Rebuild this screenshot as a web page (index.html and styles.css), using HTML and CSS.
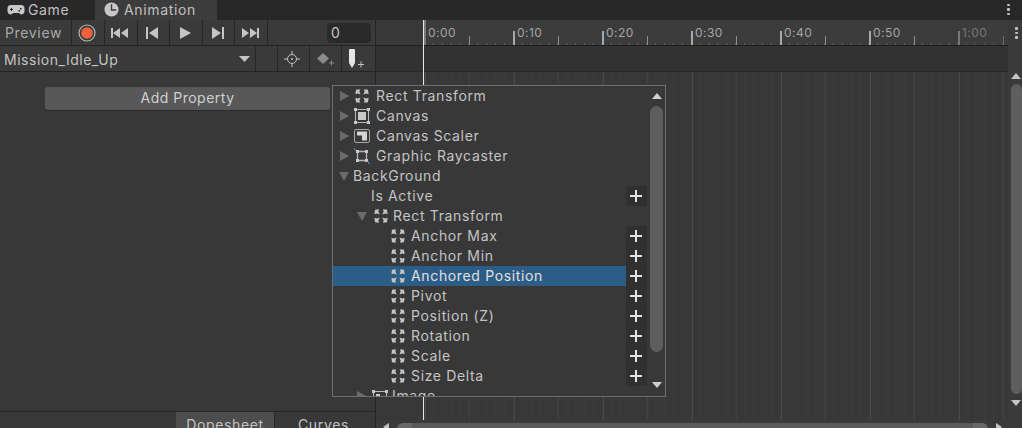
FILE: index.html
```html
<!DOCTYPE html>
<html lang="en">
<head>
<meta charset="utf-8">
<title>Animation</title>
<link rel="stylesheet" href="styles.css">
</head>
<body>
<svg class="defs" width="0" height="0" aria-hidden="true">
  <symbol id="anchor" viewBox="0 0 16 16">
    <g fill="currentColor">
      <path d="M2 1.800 6 1.200 5.400 3.600 6.600 6.600 3.600 5.600 1.400 6.200z"/>
      <path d="M14 1.800 10 1.200l.6 2.400-1.200 3 3-1 2.200.6z"/>
      <path d="M2 14.200l4 .6-.6-2.400 1.200-3-3 1-2.200-.6z"/>
      <path d="M14 14.200l-4 .6.6-2.400-1.200-3 3 1 2.200-.6z"/>
    </g>
  </symbol>
  <symbol id="plus" viewBox="0 0 14 14">
    <path fill="#e4e4e4" d="M6 1h2v5h5v2H8v5H6V8H1V6h5z"/>
  </symbol>
</svg>
<div class="window">
  <div class="tabs">
    <div class="tab">
      <svg class="tab-icon" width="18" height="12" viewBox="0 0 18 12"><path fill="#c8c8c8" d="M4 1h10a3.500 3.500 0 0 1 3.500 3.500v3a3 3 0 0 1-5.500 1.500H6A3 3 0 0 1 .5 7.500v-3A3.500 3.500 0 0 1 4 1z"/><path fill="#282828" d="M3 5h1V4h1v1h1v1H5v1H4V6H3zM13 4h1.500v1.500H13zM11.500 6H13v1.500h-1.500z"/></svg>
      Game
    </div>
    <div class="tab tab-active">
      <svg class="tab-icon" width="15" height="15" viewBox="0 0 16 16"><circle cx="8" cy="8" r="7.500" fill="#c8c8c8"/><path fill="none" stroke="#3c3c3c" stroke-width="1.500" d="M8 2.500V8.500H13"/></svg>
      Animation
    </div>
    <div class="kebab kebab-top"><i></i><i></i><i></i></div>
  </div>
  <div class="main">
    <section class="left">
      <div class="bar">
        <div class="cell cell-preview">Preview</div>
        <div class="cell cell-btn cell-rec cell-nudge">
          <svg width="18" height="18" viewBox="0 0 18 18"><circle cx="9" cy="9" r="8" fill="none" stroke="#b8b8b8" stroke-width="1.200"/><circle cx="9" cy="9" r="5.800" fill="#f4613a"/></svg>
        </div>
        <div class="cell cell-btn cell-nudge"><svg width="18" height="10" viewBox="0 0 18 10"><path fill="#c4c4c4" d="M0 0h2v10H0zM2 5l7-5v10zM10 5l7-5v10z"/></svg></div>
        <div class="cell cell-btn cell-nudge"><svg width="12" height="12" viewBox="0 0 12 12"><path fill="#c4c4c4" d="M0 0h2v12H0zM3 6l9-6v12z"/></svg></div>
        <div class="cell cell-btn"><svg width="11" height="12" viewBox="0 0 11 12"><path fill="#c4c4c4" d="M0 0l11 6-11 6z"/></svg></div>
        <div class="cell cell-btn"><svg width="12" height="12" viewBox="0 0 12 12"><path fill="#c4c4c4" d="M12 0h-2v12h2zM9 6L0 0v12z"/></svg></div>
        <div class="cell cell-btn cell-nudge"><svg width="18" height="10" viewBox="0 0 18 10"><path fill="#c4c4c4" d="M18 0h-2v10h2zM16 5L9 0v10zM8 5L1 0v10z"/></svg></div>
        <div class="frame-wrap"><div class="frame">0</div></div>
      </div>
      <div class="bar">
        <div class="cell cell-clip">Mission_Idle_Up<svg class="caret" width="11" height="6" viewBox="0 0 11 6"><path fill="#c4c4c4" d="M0 0h11L5.500 6z"/></svg></div>
        <div class="cell cell-blank"></div>
        <div class="cell cell-tool cell-tool-shift">
          <svg width="16" height="16" viewBox="0 0 16 16"><circle cx="8" cy="8" r="4.500" fill="none" stroke="#c4c4c4"/><circle cx="8" cy="8" r="1" fill="#c4c4c4"/><path stroke="#c4c4c4" d="M8 0v4M8 12v4M0 8h4M12 8h4"/></svg>
        </div>
        <div class="cell cell-tool cell-tool-shift">
          <svg width="20" height="14" viewBox="0 0 20 14"><path fill="#8a8a8a" d="M9 1l6 5.500-6 5.500-6-5.500z"/><path stroke="#8a8a8a" d="M15 11h5M17.500 8.500v5"/></svg>
        </div>
        <div class="cell cell-tool cell-tool-end">
          <svg width="16" height="20" viewBox="0 0 16 20"><path fill="#e6e6e6" d="M0 1a1 1 0 0 1 1-1h4a1 1 0 0 1 1 1v13l-3 5-3-5z"/><path stroke="#c4c4c4" d="M9 15.500h6M12 12.500v6"/></svg>
        </div>
      </div>
      <div class="props">
        <button class="add">Add Property</button>
      </div>
      <div class="modes">
        <div class="mode mode-on">Dopesheet</div>
        <div class="mode">Curves</div>
      </div>
    </section>
    <section class="right">
      <div class="timeline">
        <div class="ruler">
          <span>0:00</span><span>0:10</span><span>0:20</span><span>0:30</span><span>0:40</span><span>0:50</span><span class="dim">1:00</span>
        </div>
        <div class="band"></div>
        <div class="grid"></div>
        <div class="hscroll">
          <svg class="harrow" width="6" height="8" viewBox="0 0 6 8"><path fill="#c4c4c4" d="M6 0v8L0 4z"/></svg>
          <div class="hthumb"></div>
          <svg class="harrow" width="6" height="8" viewBox="0 0 6 8"><path fill="#c4c4c4" d="M0 0v8l6-4z"/></svg>
        </div>
      </div>
      <div class="vside">
        <div class="kebab kebab-side"><i></i><i></i><i></i></div>
        <svg class="varrow-top" width="10" height="6" viewBox="0 0 10 6"><path fill="#c4c4c4" d="M0 6h10L5 0z"/></svg>
        <div class="vthumb"></div>
        <svg class="varrow-bottom" width="10" height="6" viewBox="0 0 10 6"><path fill="#c4c4c4" d="M0 0h10L5 6z"/></svg>
      </div>
      <div class="playhead"></div>
    </section>
  </div>

  <div class="popup">
    <div class="list">
      <div class="row d0"><i class="tri tri-r"></i><svg class="ico" width="16" height="16"><use href="#anchor"/></svg><span>Rect Transform</span></div>
      <div class="row d0"><i class="tri tri-r"></i>
        <svg class="ico" width="16" height="16" viewBox="0 0 16 16"><rect x="1.500" y="1.500" width="13" height="13" fill="none" stroke="#b8b8b8"/><rect x="4" y="4" width="8" height="8" fill="#c8c8c8"/><path fill="#c8c8c8" d="M0 0h3v3H0zM13 0h3v3h-3zM0 13h3v3H0zM13 13h3v3h-3z"/></svg>
        <span>Canvas</span></div>
      <div class="row d0"><i class="tri tri-r"></i>
        <svg class="ico" width="16" height="16" viewBox="0 0 16 16"><rect x=".5" y="1.500" width="15" height="13" rx="1.500" fill="none" stroke="#a8a8a8"/><path fill="#d4d4d4" d="M3 3.500h10v9H8v-5H3z"/></svg>
        <span>Canvas Scaler</span></div>
      <div class="row d0"><i class="tri tri-r"></i>
        <svg class="ico" width="16" height="16" viewBox="0 0 16 16"><path fill="none" stroke="#b8b8b8" stroke-width="1.300" d="M3.500 3.500h9v9h-9z"/><path fill="#c8c8c8" d="M2 2h3v3H2zM11 2h3v3h-3zM2 11h3v3H2zM11 11h3v3h-3z"/><path stroke="#3fa6d8" d="M0 0l2 3M13.500 13l2 3"/></svg>
        <span>Graphic Raycaster</span></div>
      <div class="row d-head"><i class="tri tri-d"></i><span>BackGround</span></div>
      <div class="row d-leaf-a"><span class="grow">Is Active</span><b class="add-btn"><svg width="14" height="14"><use href="#plus"/></svg></b></div>
      <div class="row d1"><i class="tri tri-d"></i><svg class="ico" width="16" height="16"><use href="#anchor"/></svg><span>Rect Transform</span></div>
      <div class="row d2"><svg class="ico" width="16" height="16"><use href="#anchor"/></svg><span class="grow">Anchor Max</span><b class="add-btn"><svg width="14" height="14"><use href="#plus"/></svg></b></div>
      <div class="row d2"><svg class="ico" width="16" height="16"><use href="#anchor"/></svg><span class="grow">Anchor Min</span><b class="add-btn"><svg width="14" height="14"><use href="#plus"/></svg></b></div>
      <div class="row d2 row-sel"><svg class="ico" width="16" height="16"><use href="#anchor"/></svg><span class="grow">Anchored Position</span><b class="add-btn"><svg width="14" height="14"><use href="#plus"/></svg></b></div>
      <div class="row d2"><svg class="ico" width="16" height="16"><use href="#anchor"/></svg><span class="grow">Pivot</span><b class="add-btn"><svg width="14" height="14"><use href="#plus"/></svg></b></div>
      <div class="row d2"><svg class="ico" width="16" height="16"><use href="#anchor"/></svg><span class="grow">Position (Z)</span><b class="add-btn"><svg width="14" height="14"><use href="#plus"/></svg></b></div>
      <div class="row d2"><svg class="ico" width="16" height="16"><use href="#anchor"/></svg><span class="grow">Rotation</span><b class="add-btn"><svg width="14" height="14"><use href="#plus"/></svg></b></div>
      <div class="row d2"><svg class="ico" width="16" height="16"><use href="#anchor"/></svg><span class="grow">Scale</span><b class="add-btn"><svg width="14" height="14"><use href="#plus"/></svg></b></div>
      <div class="row d2"><svg class="ico" width="16" height="16"><use href="#anchor"/></svg><span class="grow">Size Delta</span><b class="add-btn"><svg width="14" height="14"><use href="#plus"/></svg></b></div>
      <div class="row d1"><i class="tri tri-r"></i>
        <svg class="ico" width="16" height="16" viewBox="0 0 16 16"><path fill="none" stroke="#b8b8b8" d="M1.500 3.500h13v10h-13z"/><path fill="#c8c8c8" d="M0 2h3v3H0zM13 2h3v3h-3zM4 6h4v4H4z"/></svg>
        <span>Image</span></div>
    </div>
    <div class="pscroll">
      <svg class="parrow-top" width="10" height="6" viewBox="0 0 10 6"><path fill="#d0d0d0" d="M0 6h10L5 0z"/></svg>
      <div class="pthumb"></div>
      <svg class="parrow-bottom" width="10" height="6" viewBox="0 0 10 6"><path fill="#d0d0d0" d="M0 0h10L5 6z"/></svg>
    </div>
  </div>
</div>
</body>
</html>
```
FILE: styles.css
```css
* { box-sizing: border-box; }
html, body { margin: 0; padding: 0; }
body {
  width: 1022px;
  height: 428px;
  overflow: hidden;
  background: #383838;
  font-family: Inter, "Liberation Sans", sans-serif;
  font-size: 14px;
  letter-spacing: .65px;
  color: #c4c4c4;
}
.defs { position: absolute; }
.window { position: relative; width: 1022px; height: 428px; display: flex; flex-direction: column; overflow: hidden; }

/* window tabs */
.tabs { flex: none; height: 20px; background: #282828; display: flex; align-items: stretch; }
.tab { width: 95px; display: flex; align-items: center; gap: 3px; padding: 0 0 1px 7px; color: #c0c0c0; line-height: 18px; }
.tab-active { width: 122px; background: #3c3c3c; padding-left: 9px; gap: 5px; }
.tab-icon { flex: none; }
.kebab { display: flex; flex-direction: column; gap: 2px; }
.kebab i { width: 3px; height: 2.500px; background: #c4c4c4; border-radius: 1px; }
.kebab-top { margin: 0 12px 3px auto; padding-top: 2px; justify-content: center; }

/* main */
.main { flex: 1; display: flex; min-height: 0; }
.left { flex: none; width: 376px; display: flex; flex-direction: column; background: #383838; border-right: 1px solid #242424; }
.bar { flex: none; height: 26px; background: #3a3a3a; border-bottom: 1px solid #232323; display: flex; align-items: stretch; }
.cell { display: flex; align-items: center; justify-content: center; border-right: 1px solid #262626; }
.cell-preview { width: 72px; justify-content: flex-start; padding-left: 5px; color: #a8a8a8; }
.cell-btn { width: 32.500px; }
.cell-rec { width: 33px; }
.cell-nudge { padding-right: 2px; }
.frame-wrap { flex: 1; display: flex; align-items: center; justify-content: flex-end; padding-right: 4px; }
.frame { width: 44px; height: 20px; background: #2a2a2a; border-radius: 4px; padding-left: 4px; line-height: 20px; color: #c4c4c4; }
.cell-clip { width: 256px; justify-content: flex-start; padding: 1px 0 0 4px; letter-spacing: .52px; }
.caret { margin-left: auto; margin-right: 5px; }
.cell-blank { width: 22px; }
.cell-tool { width: 32px; }
.cell-tool-shift { padding-right: 4px; }
.cell-tool-end { flex: 1; border-right: 0; padding-right: 3px; }
.props { flex: 1; padding: 15px 45px 0; }
.add {
  display: block;
  width: 285px;
  height: 23px;
  margin: 0;
  padding: 0 0 2px;
  border: 0;
  border-radius: 3px;
  background: #585858;
  box-shadow: 0 1px 0 #2a2a2a;
  color: #d0d0d0;
  font: inherit;
  letter-spacing: .5px;
}
.modes { flex: none; height: 17px; display: flex; justify-content: flex-end; border-top: 1px solid #232323; overflow: hidden; }
.mode { width: 100px; padding-right: 3px; text-align: center; line-height: 26px; color: #c4c4c4; }
.mode-on { width: 99px; padding-right: 0; background: #4d4d4d; border-right: 1px solid #2a2a2a; }

/* timeline */
.right { flex: 1; position: relative; display: flex; min-width: 0; }
.timeline { width: 632px; display: flex; flex-direction: column; }
.ruler {
  flex: none;
  position: relative;
  height: 26px;
  display: flex;
  padding-left: 47px;
  border-bottom: 1px solid #1e1e1e;
  font-size: 12px;
  letter-spacing: .45px;
  color: #a4a4a4;
  background-color: #3c3c3c;
  background-image:
    linear-gradient(#787878, #787878),
    linear-gradient(90deg, #a8a8a8 2px, transparent 2px),
    linear-gradient(90deg, #909090 1px, transparent 1px),
    linear-gradient(90deg, #606060 1px, transparent 1px);
  background-repeat: no-repeat, repeat-x, repeat-x, repeat-x;
  background-size: 2px 100%, 89px 14px, 89px 9px, 8.900px 2px;
  background-position: 1px 0, 1px 100%, 46px 100%, 1px 100%;
  background-origin: content-box;
  background-clip: content-box, content-box, content-box, content-box, border-box;
}
.ruler::after { content: ""; position: absolute; left: 582px; top: 0; bottom: 0; right: 0; background: rgba(60, 60, 60, .45); }
.ruler span { width: 89px; flex: none; padding-left: 5px; line-height: 25px; }
.ruler .dim { width: 50px; }
.band { flex: none; height: 26px; background: #323232; border-bottom: 1px solid #2a2a2a; }
.grid {
  flex: 1;
  padding-left: 47px;
  background-color: #383838;
  background-image:
    linear-gradient(90deg, #4a4a4a 1px, transparent 1px),
    linear-gradient(90deg, #414141 1px, transparent 1px),
    linear-gradient(90deg, #3c3c3c 1px, transparent 1px);
  background-size: 89px 100%, 89px 100%, 8.900px 100%;
  background-position: 2px 0, 46px 0, 1px 0;
  background-origin: content-box;
  background-clip: content-box, content-box, content-box, border-box;
}
.hscroll { flex: none; height: 8px; display: flex; align-items: flex-start; gap: 8px; padding: 3px 0 0 7px; background: #3a3a3a; overflow: hidden; }
.harrow { flex: none; }
.hthumb { flex: none; width: 591px; height: 8px; background: linear-gradient(90deg, #686868 15px, #5a5a5a 15px, #5a5a5a calc(100% - 15px), #686868 calc(100% - 15px)); border-radius: 6px 6px 0 0; }
.vside { flex: 1; position: relative; display: flex; flex-direction: column; align-items: center; background: #3a3a3a; padding-left: 2px; }
.kebab-side { margin-top: 7px; height: 25px; }
.varrow-top { flex: none; margin-top: 21px; }
.vthumb { flex: none; width: 11px; height: 310px; margin-top: 5px; background: #5e5e5e; border-radius: 6px; }
.varrow-bottom { flex: none; margin-top: 6px; }
.playhead { position: absolute; left: 47px; top: 0; bottom: 8px; width: 1px; background: #e8e8e8; }

/* popup */
.popup {
  position: absolute;
  left: 332px;
  top: 85px;
  width: 334px;
  height: 312px;
  display: flex;
  background: #383838;
  border: 1px solid #6e6e6e;
  overflow: hidden;
}
.list { width: 314px; flex: none; }
.row { height: 20px; display: flex; align-items: center; white-space: nowrap; color: #c4c4c4; }
.row span { padding-bottom: 2px; }
.d0 { padding-left: 7px; }
.d0 .tri { margin-right: 5px; }
.d0 .ico { margin-right: 6px; }
.d-head { padding-left: 6px; }
.d-head .tri { margin-right: 4px; }
.d-leaf-a { padding-left: 38px; }
.d1 { padding-left: 24px; }
.d1 .tri { margin-right: 6px; }
.d1 .ico { margin-right: 4px; }
.d2 { padding-left: 57px; }
.d2 .ico { margin-right: 5px; }
.row-sel { background: linear-gradient(90deg, #2c5d87 293px, transparent 293px); color: #e0e0e0; }
.grow { flex: 1; }
.tri { flex: none; width: 0; height: 0; border-style: solid; border-color: transparent; }
.tri-r { border-width: 5px 0 5px 9px; border-left-color: #6c6c6c; }
.tri-d { border-width: 9px 5px 0 5px; border-top-color: #6c6c6c; }
.ico { flex: none; color: #c4c4c4; }
.add-btn { flex: none; width: 21px; height: 20px; padding-right: 2px; background: #303030; display: flex; align-items: center; justify-content: center; }
.pscroll { flex: 1; display: flex; flex-direction: column; align-items: center; padding-left: 1px; }
.parrow-top { flex: none; margin-top: 7px; }
.pthumb { flex: none; width: 13px; height: 246px; margin-top: 7px; background: #5e5e5e; border-radius: 7px; }
.parrow-bottom { flex: none; margin-top: 30px; }
```
